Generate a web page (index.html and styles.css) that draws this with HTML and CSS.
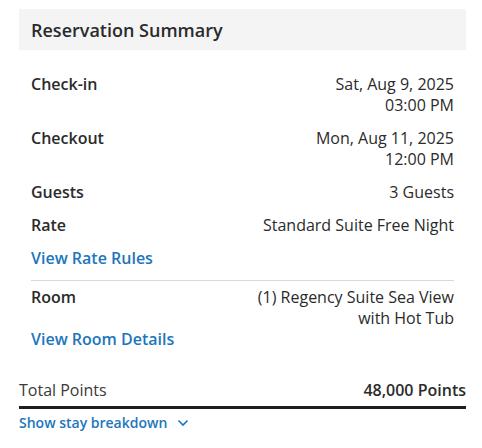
FILE: index.html
```html
<!DOCTYPE html>
<html>

<head>
    <title>Reservation Summary</title>
    <link rel="stylesheet" href="styles.css">
</head>

<body>
    <div class="summary">
        <div class="summary-header">
            <h2>Reservation Summary</h2>
        </div>

        <div class="summary-body">
            <div class="row">
                <span class="label">Check-in</span>
                <span class="value">Sat, Aug 9, 2025<br>03:00 PM</span>
            </div>
            <div class="row">
                <span class="label">Checkout</span>
                <span class="value">Mon, Aug 11, 2025<br>12:00 PM</span>
            </div>
            <div class="row">
                <span class="label">Guests</span>
                <span class="value">3 Guests</span>
            </div>
            <div class="row">
                <span class="label">Rate</span>
                <span class="value">Standard Suite Free Night</span>
            </div>
            <a class="link" href="#">View Rate Rules</a>

            <div class="divider"></div>

            <div class="row room-row">
                <span class="label">Room</span>
                <span class="value">(1) Regency Suite Sea View<br>with Hot Tub</span>
            </div>
            <a class="link room-link" href="#">View Room Details</a>
        </div>

        <div class="total">
            <span class="total-label">Total Points</span>
            <span class="total-value">48,000 Points</span>
        </div>
        <a class="breakdown" href="#">Show stay breakdown
            <svg width="12" height="8" viewBox="0 0 12 8">
                <path d="M1.5 1.5 L6 6 L10.5 1.5" fill="none" stroke="#1c76bc" stroke-width="1.6" />
            </svg>
        </a>
    </div>
</body>

</html>
```

FILE: styles.css
```css
body {
    font-family: "Open Sans", Arial, sans-serif;
    margin: 0;
    padding: 9px 16px 0 19px;
    background: #fff;
    color: #2b2b2b;
}

.summary {
    width: 447px;
}

.summary-header {
    background: #f4f4f4;
    padding: 0 12px;
    height: 41px;
    display: flex;
    align-items: center;
}

.summary-header h2 {
    margin: 0;
    font-size: 18px;
    font-weight: 600;
    color: #2b2b2b;
}

.summary-body {
    padding: 24px 12px 0;
    font-size: 16px;
    line-height: 21px;
}

.row {
    display: flex;
    justify-content: space-between;
    margin-bottom: 12px;
}

.label {
    font-weight: 600;
}

.value {
    text-align: right;
}

.link {
    display: block;
    color: #1c76bc;
    font-weight: 600;
    text-decoration: none;
}

.divider {
    border-top: 1px solid #d9d9d9;
    margin: 11px 0 6px;
}

.room-row {
    margin-bottom: 0;
}

.total {
    display: flex;
    justify-content: space-between;
    margin-top: 30px;
    font-size: 16px;
    line-height: 21px;
    padding-bottom: 5px;
    border-bottom: 3px solid #1f1f1f;
}

.total-label {
    color: #3a3a3a;
}

.total-value {
    font-weight: 600;
}

.breakdown {
    display: inline-flex;
    align-items: center;
    gap: 10px;
    margin-top: 4px;
    color: #1c76bc;
    font-size: 14px;
    font-weight: 600;
    line-height: 20px;
    text-decoration: none;
}
```
